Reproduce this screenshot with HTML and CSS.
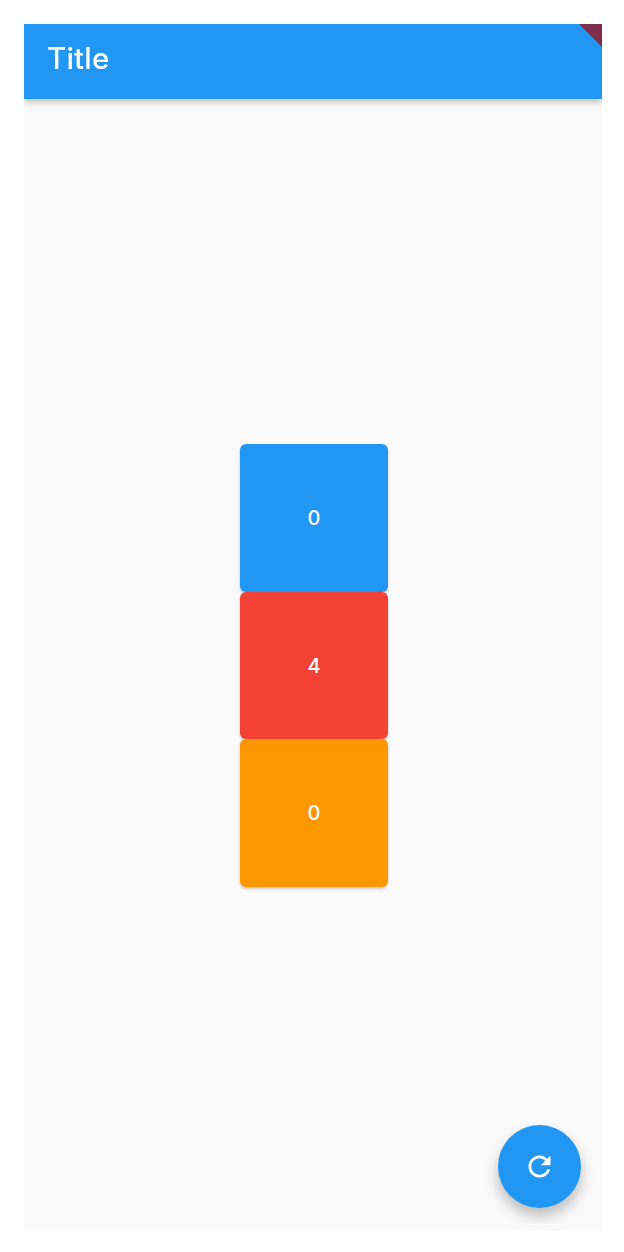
FILE: index.html
```html
<!DOCTYPE html>
<html lang="en">
<head>
<meta charset="utf-8">
<title>Title</title>
<link rel="stylesheet" href="styles.css">
</head>
<body>
<div class="screen">
  <header class="appbar"><h1 class="appbar-title">Title</h1></header>
  <main class="content">
    <div class="stack">
      <div class="tile tile-blue">0</div>
      <div class="tile tile-red">4</div>
      <div class="tile tile-orange">0</div>
    </div>
  </main>
  <div class="banner"></div>
  <button class="fab" type="button" aria-label="Refresh">
    <svg class="fab-icon" viewBox="0 0 24 24" aria-hidden="true"><path d="M17.65 6.35C16.2 4.9 14.21 4 12 4c-4.42 0-7.99 3.58-7.99 8s3.57 8 7.99 8c3.73 0 6.84-2.55 7.73-6h-2.08c-.82 2.33-3.04 4-5.65 4-3.31 0-6-2.69-6-6s2.69-6 6-6c1.66 0 3.14.69 4.22 1.78L13 11h7V4l-2.35 2.35z"/></svg>
  </button>
</div>
</body>
</html>
```

FILE: styles.css
```css
html, body {
  margin: 0;
  height: 100%;
  background: #fff;
}
body {
  padding: 24px 22px 21px 24px;
  box-sizing: border-box;
  font-family: "Inter", "Roboto", sans-serif;
  overflow: hidden;
}
.screen {
  position: relative;
  display: flex;
  flex-direction: column;
  height: 1207px;
  background: #fafafa;
  overflow: hidden;
}
.appbar {
  position: relative;
  z-index: 1;
  flex: none;
  height: 75px;
  padding: 0 0 8px 23px;
  box-sizing: border-box;
  display: flex;
  align-items: center;
  background: #2196f3;
  box-shadow: 0 3px 7px rgba(0, 0, 0, 0.24);
}
.appbar-title {
  margin: 0;
  color: #fff;
  font-family: "Inter", sans-serif;
  font-size: 29.5px;
  font-weight: 500;
  letter-spacing: 0.2px;
  filter: blur(0.5px);
}
.content {
  flex: 1;
  display: flex;
  align-items: center;
  justify-content: center;
  padding: 1px 0 0 2px;
}
.stack {
  display: flex;
  flex-direction: column;
  width: 148px;
}
.tile {
  height: 147.67px;
  display: flex;
  align-items: center;
  justify-content: center;
  border-radius: 6px;
  color: #fff;
  font-family: "Inter", sans-serif;
  font-size: 20px;
  font-weight: 500;
  box-shadow: 0 2px 3px rgba(0, 0, 0, 0.2);
}
.tile-blue { background: #2196f3; }
.tile-red { background: #f44336; }
.tile-orange { background: #ff9800; }
.banner {
  position: absolute;
  z-index: 2;
  top: 0;
  right: 0;
  width: 23px;
  height: 23px;
  background: #7f2d4d;
  clip-path: polygon(0 0, 100% 0, 100% 100%);
  filter: blur(0.4px);
}
.fab {
  position: absolute;
  z-index: 2;
  right: 21px;
  bottom: 23px;
  width: 83px;
  height: 83px;
  padding: 0;
  border: 0;
  border-radius: 50%;
  background: #2196f3;
  display: flex;
  align-items: center;
  justify-content: center;
  box-shadow: 0 8px 14px rgba(0, 0, 0, 0.25);
}
.fab-icon {
  width: 33px;
  height: 33px;
  fill: #fff;
}
```
